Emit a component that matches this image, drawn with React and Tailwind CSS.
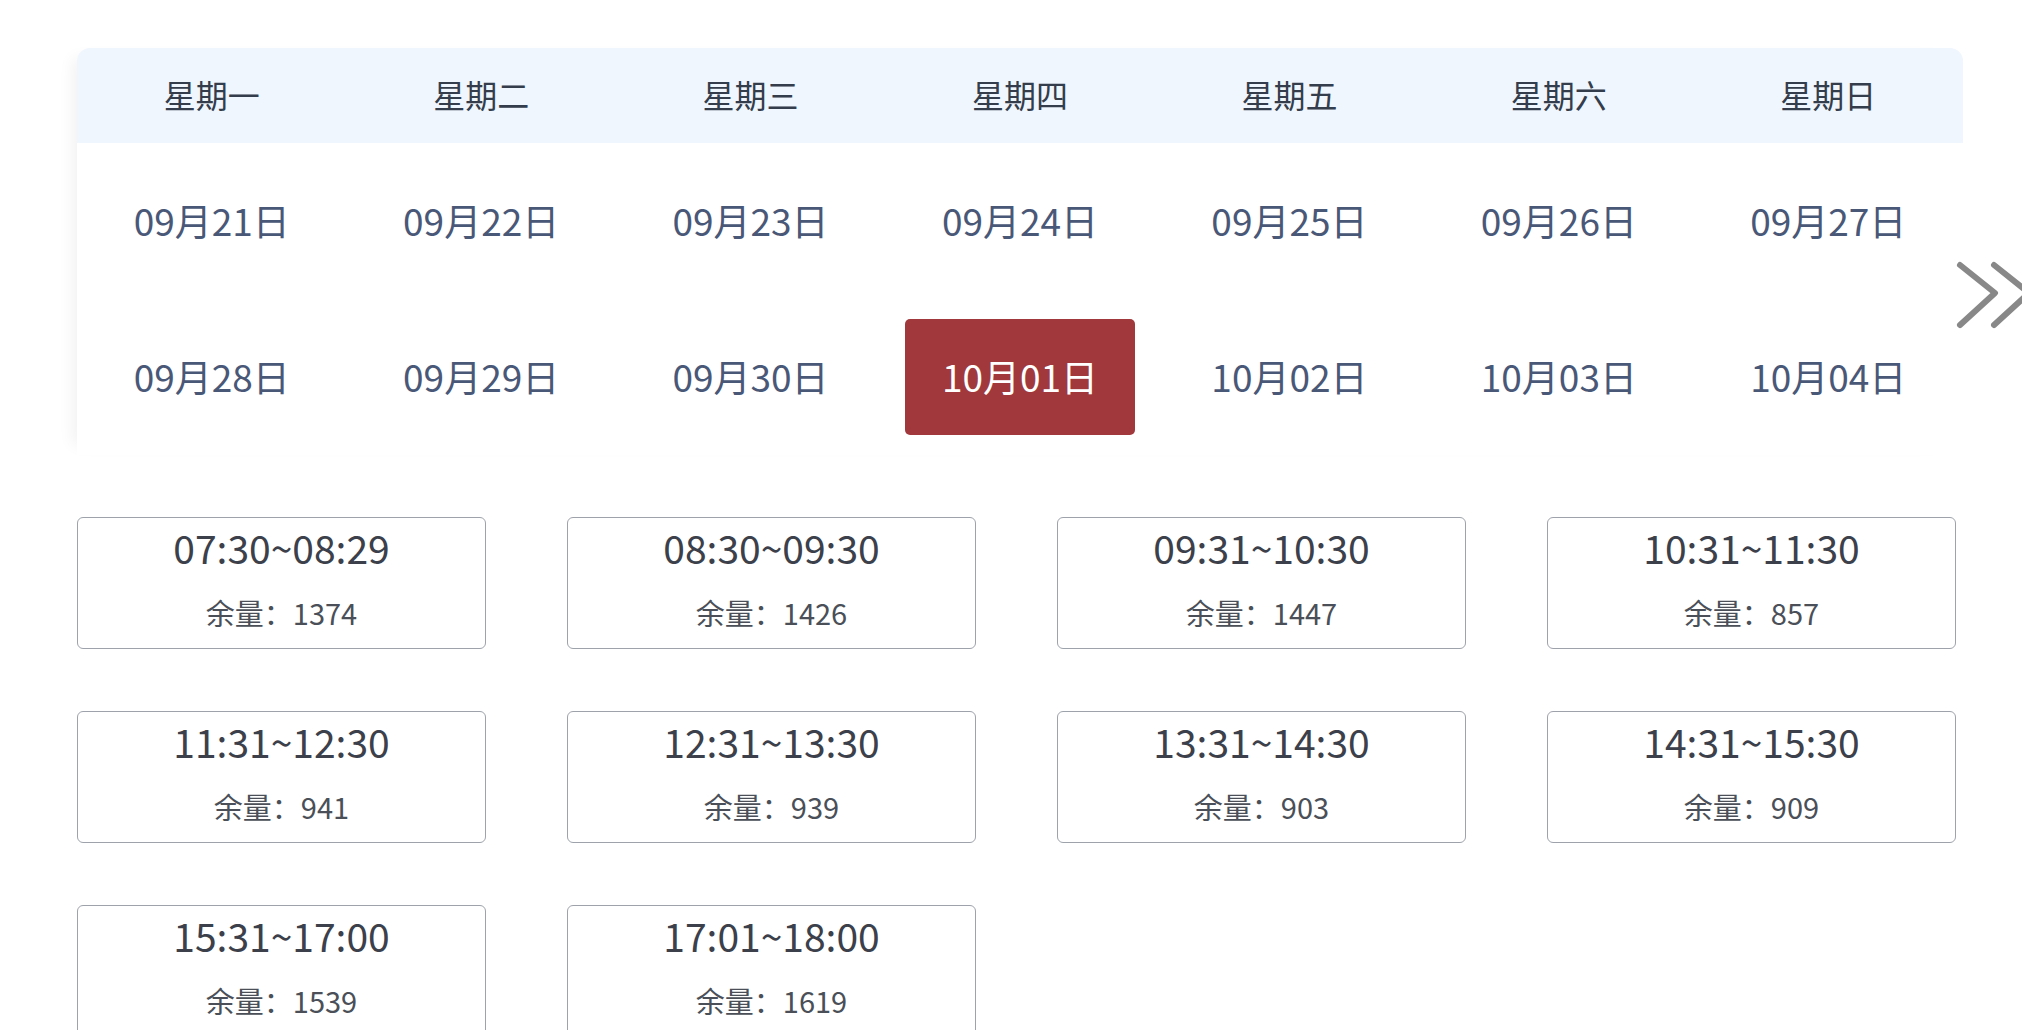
import React from 'react';

const weekDays = ['星期一', '星期二', '星期三', '星期四', '星期五', '星期六', '星期日'];

const dates = [
  '09月21日', '09月22日', '09月23日', '09月24日', '09月25日', '09月26日', '09月27日',
  '09月28日', '09月29日', '09月30日', '10月01日', '10月02日', '10月03日', '10月04日',
];

const slots = [
  { time: '07:30~08:29', left: 1374 },
  { time: '08:30~09:30', left: 1426 },
  { time: '09:31~10:30', left: 1447 },
  { time: '10:31~11:30', left: 857 },
  { time: '11:31~12:30', left: 941 },
  { time: '12:31~13:30', left: 939 },
  { time: '13:31~14:30', left: 903 },
  { time: '14:31~15:30', left: 909 },
  { time: '15:31~17:00', left: 1539 },
  { time: '17:01~18:00', left: 1619 },
];

const selected = '10月01日';

export default function App() {
  return (
    <div className="relative min-h-screen w-full overflow-hidden bg-white pt-[48px] pl-[77px] font-['Noto_Sans_CJK_SC','Microsoft_YaHei',sans-serif]">
      {/* 日历 */}
      <div className="relative w-[1886px] rounded-t-[13px] bg-white shadow-[-14px_0_16px_-10px_rgba(0,0,0,0.06)]">
        <div className="grid h-[95px] grid-cols-7 rounded-t-[13px] bg-[#f0f6fe] pb-[4px]">
          {weekDays.map((d) => (
            <div key={d} className="flex items-center justify-center text-[32px] text-[#343d4b]">
              {d}
            </div>
          ))}
        </div>

        <div className="grid grid-cols-7">
          {dates.map((d) => (
            <div key={d} className="flex h-[156px] p-[20px]">
              <div
                className={`flex flex-1 items-center justify-center rounded-[5px] text-[37px] ${
                  d === selected ? 'bg-[#a0383c] text-white' : 'text-[#4a5878]'
                }`}
              >
                {d}
              </div>
            </div>
          ))}
        </div>

        {/* 下一周 */}
        <svg
          className="absolute top-[211px] left-[1877px] h-[72px] w-[80px]"
          viewBox="0 0 80 72"
          fill="none"
          stroke="#888888"
          strokeWidth="6"
          strokeLinecap="round"
          strokeLinejoin="round"
        >
          <polyline points="6,6 41,34 6,66" />
          <polyline points="40,6 75,34 40,66" />
        </svg>
      </div>

      {/* 时间段 */}
      <div className="mt-[62px] grid grid-cols-[repeat(4,409px)] gap-x-[81px] gap-y-[62px]">
        {slots.map((s) => (
          <div
            key={s.time}
            className="flex h-[132px] flex-col items-center rounded-[6px] border-[1.5px] border-[#9ea3ab]"
          >
            <div className="mt-[5px] text-[39px] leading-[48px] text-[#3b404a]">{s.time}</div>
            <div className="mt-[21px] text-[29px] leading-[40px] text-[#4a4f58]">余量：{s.left}</div>
          </div>
        ))}
      </div>
    </div>
  );
}
